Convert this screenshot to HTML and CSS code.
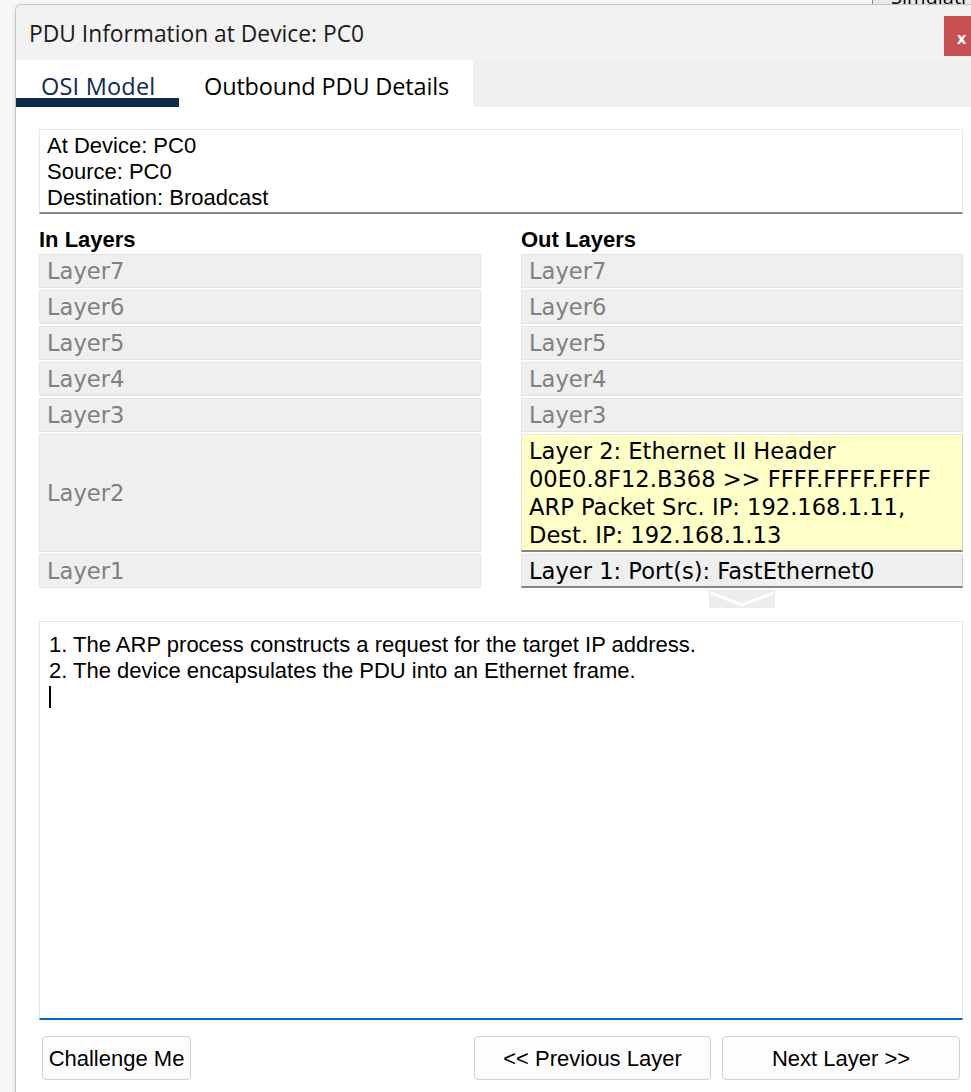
FILE: index.html
```html
<!DOCTYPE html>
<html>
<head>
<meta charset="utf-8">
<link rel="stylesheet" href="styles.css">
</head>
<body>
<div class="bgwin"><span class="bgwin-text">Simulati</span></div>
<div class="window">
  <div class="titlebar">
    <span class="title">PDU Information at Device: PC0</span>
    <div class="close">x</div>
  </div>
  <div class="tabbar">
    <div class="tabs">
      <div class="tab active">OSI Model</div>
      <div class="tab tab2">Outbound PDU Details</div>
    </div>
  </div>
  <div class="content">
    <div class="info">
      <div>At Device: PC0</div>
      <div>Source: PC0</div>
      <div>Destination: Broadcast</div>
    </div>
    <div class="layers">
      <div class="col">
        <div class="col-head">In Layers</div>
        <div class="row">Layer7</div>
        <div class="row">Layer6</div>
        <div class="row">Layer5</div>
        <div class="row">Layer4</div>
        <div class="row">Layer3</div>
        <div class="row tall">Layer2</div>
        <div class="row">Layer1</div>
      </div>
      <div class="col">
        <div class="col-head">Out Layers</div>
        <div class="row">Layer7</div>
        <div class="row">Layer6</div>
        <div class="row">Layer5</div>
        <div class="row">Layer4</div>
        <div class="row">Layer3</div>
        <div class="row tall hl yellow">Layer 2: Ethernet II Header<br>00E0.8F12.B368 &gt;&gt; FFFF.FFFF.FFFF<br>ARP Packet Src. IP: 192.168.1.11,<br>Dest. IP: 192.168.1.13</div>
        <div class="row hl">Layer 1: Port(s): FastEthernet0</div>
      </div>
    </div>
    <div class="arrow-wrap">
      <div class="arrow">
        <svg width="66" height="18" viewBox="0 0 66 18"><rect x="0" y="0" width="66" height="18" fill="#ececec"/><polyline points="2,3 33,15 64,3" fill="none" stroke="#ffffff" stroke-width="3"/></svg>
      </div>
    </div>
    <div class="desc">
      <div>1. The ARP process constructs a request for the target IP address.</div>
      <div>2. The device encapsulates the PDU into an Ethernet frame.</div>
      <div class="caret"></div>
    </div>
    <div class="buttons">
      <button class="btn btn-challenge">Challenge Me</button>
      <div class="spacer"></div>
      <button class="btn btn-prev">&lt;&lt; Previous Layer</button>
      <button class="btn btn-next">Next Layer &gt;&gt;</button>
    </div>
  </div>
</div>
</body>
</html>
```
FILE: styles.css
```css
html, body {
  margin: 0;
  padding: 0;
  background: #f7f7f7;
  overflow: hidden;
  height: 1092px;
}
.bgwin {
  position: absolute;
  left: 872px;
  top: 0;
  width: 99px;
  height: 4px;
  background: #e9e9e9;
  border-left: 1px solid #8a8a8a;
  overflow: hidden;
}
.bgwin-text {
  position: absolute;
  left: 18px;
  top: -17px;
  font: 20px "Open Sans", sans-serif;
  color: #000;
}
.window {
  margin: 4px 0 0 15px;
  background: #ffffff;
  border-left: 1px solid #c6c6c6;
  border-top: 1px solid #c6c6c6;
  border-top-left-radius: 7px;
  height: 1100px;
  overflow: hidden;
  box-shadow: -2px 0 3px rgba(0,0,0,0.06);
}
.titlebar {
  height: 55px;
  background: #f2f2f2;
  display: flex;
  align-items: center;
  padding-left: 13px;
  position: relative;
}
.title {
  font-family: "Open Sans", "Noto Sans", sans-serif;
  font-size: 22.8px;
  color: #1a1a1a;
  letter-spacing: 0;
  padding-top: 2px;
}
.close {
  position: absolute;
  left: 928px;
  top: 11px;
  width: 46px;
  height: 40px;
  background: #c75050;
  color: #fff;
  font: bold 16px "Open Sans", sans-serif;
  display: flex;
  align-items: center;
  padding: 3px 0 0 13px;
  box-sizing: border-box;
}
.tabbar {
  height: 47px;
  background: #f0f0f0;
  display: flex;
}
.tabs {
  display: flex;
  background: #ffffff;
}
.tab {
  font-family: "Open Sans", "Noto Sans", sans-serif;
  font-size: 23.5px;
  color: #000;
  padding: 5px 0 0 25px;
  display: flex;
  align-items: center;
  height: 47px;
  box-sizing: border-box;
  letter-spacing: -0.15px;
}
.tab.active {
  width: 163px;
  color: #0e2a4e;
  border-bottom: 9px solid #0e2a4e;
  padding-top: 14px;
  letter-spacing: 0.2px;
}
.tab2 {
  width: 294px;
}
.content {
  padding: 22px 0 0 23px;
  width: 924px;
}
.info {
  height: 85px;
  box-sizing: border-box;
  border: 1px solid #e6e6e6;
  border-bottom: 2px solid #8a8a8a;
  padding: 3px 8px 0 7px;
  font-family: "Liberation Sans", Arial, sans-serif;
  font-size: 22px;
  line-height: 26px;
  color: #000;
}
.layers {
  display: flex;
  gap: 40px;
  margin-top: 13px;
}
.col {
  width: 442px;
  display: flex;
  flex-direction: column;
  gap: 2px;
}
.col-head {
  font-family: "Liberation Sans", Arial, sans-serif;
  font-weight: bold;
  font-size: 22px;
  line-height: 25px;
}
.row {
  height: 34px;
  box-sizing: border-box;
  border: 1px solid #e4e4e4;
  background: #efefef;
  color: #808080;
  font-family: "DejaVu Sans", Verdana, sans-serif;
  font-size: 22.6px;
  letter-spacing: 0;
  padding-left: 7px;
  display: flex;
  align-items: center;
  white-space: nowrap;
}
.row.tall {
  height: 118px;
}
.row.hl {
  color: #000;
  border-bottom: 2px solid #858585;
  border-right: 1px solid #d0d0d0;
  padding-top: 1px;
}
.row.yellow {
  background: #ffffc8;
  line-height: 28px;
}
.arrow-wrap {
  display: flex;
  justify-content: flex-end;
  padding-right: 188px;
  margin-top: 2px;
}
.arrow {
  height: 18px;
  display: flex;
}
.desc {
  margin-top: 13px;
  height: 399px;
  box-sizing: border-box;
  border: 1px solid #e4e4e4;
  border-bottom: 2px solid #0067c0;
  padding: 10px 9px;
  font-family: "Liberation Sans", Arial, sans-serif;
  font-size: 22px;
  line-height: 26px;
  color: #000;
}
.caret {
  width: 2px;
  height: 22px;
  background: #000;
  margin-top: 2px;
}
.buttons {
  display: flex;
  margin-top: 16px;
  gap: 11px;
  padding: 0 3px 0 3px;
}
.spacer {
  flex: 1;
}
.btn {
  height: 44px;
  background: #fdfdfd;
  border: 1px solid #d0d0d0;
  border-radius: 4px;
  font-family: "Liberation Sans", Arial, sans-serif;
  font-size: 22px;
  color: #000;
  padding: 2px 0 0 0;
}
.btn-challenge {
  width: 149px;
}
.btn-prev {
  width: 237px;
}
.btn-next {
  width: 238px;
}
```
